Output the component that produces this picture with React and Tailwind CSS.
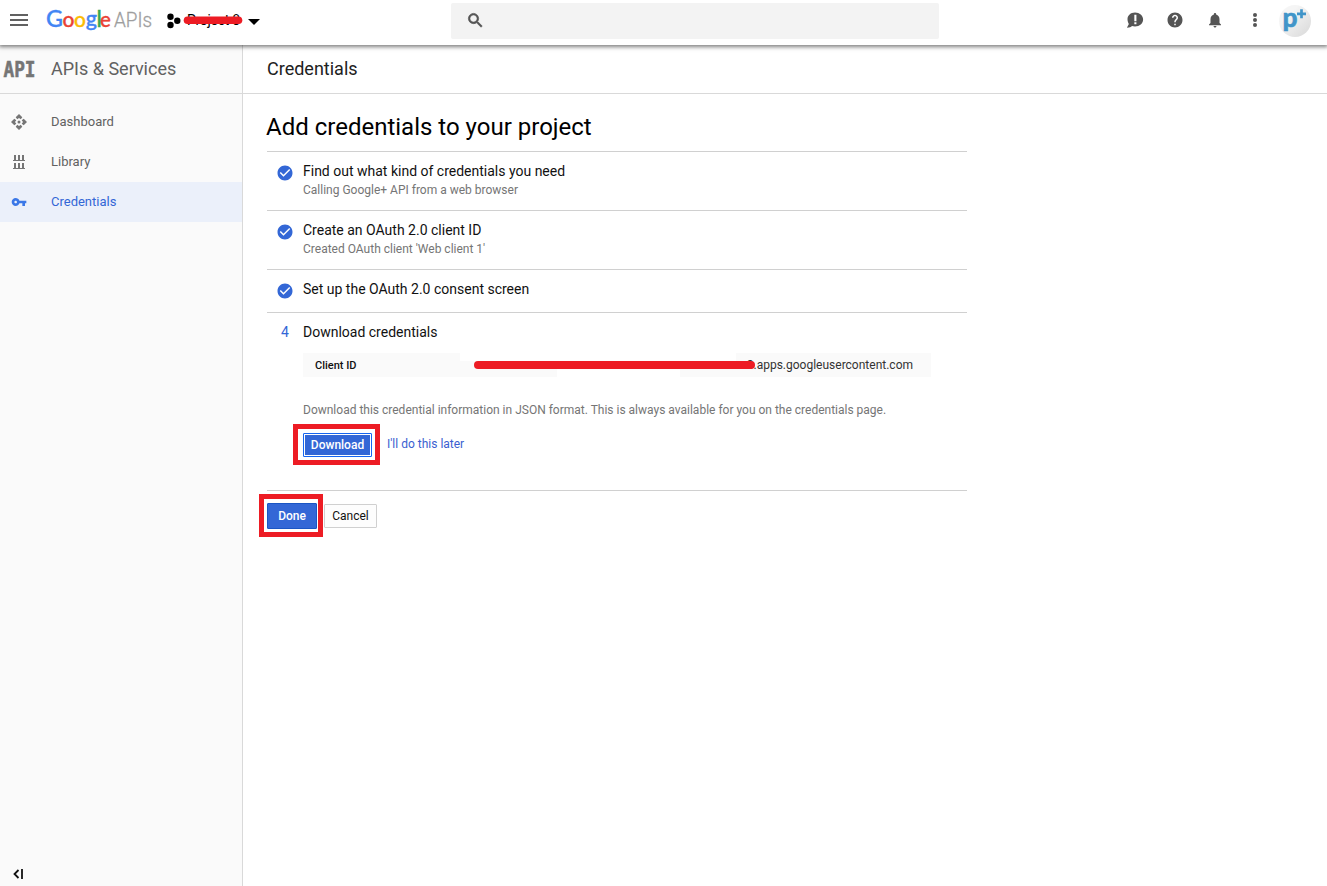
import React from "react";

const P = {
  help: "M12 2C6.48 2 2 6.48 2 12s4.48 10 10 10 10-4.48 10-10S17.52 2 12 2zm1 17h-2v-2h2v2zm2.07-7.75l-.9.92C13.45 12.9 13 13.5 13 15h-2v-.5c0-1.1.45-2.1 1.17-2.83l1.24-1.26c.37-.36.59-.86.59-1.41 0-1.1-.9-2-2-2s-2 .9-2 2H8c0-2.21 1.79-4 4-4s4 1.79 4 4c0 .88-.36 1.68-.93 2.25z",
  bell: "M12 22c1.1 0 2-.9 2-2h-4c0 1.1.89 2 2 2zm6-6v-5c0-3.07-1.64-5.64-4.5-6.32V4c0-.83-.67-1.5-1.5-1.5s-1.5.67-1.5 1.5v.68C7.63 5.36 6 7.92 6 11v5l-2 2v1h16v-1l-2-2z",
  search: "M15.5 14h-.79l-.28-.27C15.41 12.59 16 11.11 16 9.5 16 5.91 13.09 3 9.5 3S3 5.91 3 9.5 5.91 16 9.5 16c1.61 0 3.09-.59 4.23-1.57l.27.28v.79l5 4.99L20.49 19l-4.99-5zm-6 0C7.01 14 5 11.99 5 9.5S7.01 5 9.5 5 14 7.01 14 9.5 11.99 14 9.5 14z",
  key: "M12.65 10C11.83 7.67 9.61 6 7 6c-3.31 0-6 2.69-6 6s2.69 6 6 6c2.61 0 4.83-1.67 5.65-4H17v4h4v-4h2v-4H12.65zM7 14c-1.1 0-2-.9-2-2s.9-2 2-2 2 .9 2 2-.9 2-2 2z",
  check: "M12 2C6.48 2 2 6.48 2 12s4.48 10 10 10 10-4.48 10-10S17.52 2 12 2zm-2 15l-5-5 1.41-1.41L10 14.17l7.59-7.59L19 8l-9 9z",
};

function Icon({ d, className, viewBox = "0 0 24 24", children }) {
  return (
    <svg viewBox={viewBox} className={className} fill="currentColor" aria-hidden="true">
      {d ? <path d={d} /> : children}
    </svg>
  );
}

function Logo() {
  return (
    <svg className="ml-[17px] h-[45px] w-[110px] shrink-0" viewBox="45 0 110 45" fontFamily="Lato, sans-serif" fontSize="22.5">
      <g fontWeight="500" strokeWidth="0.35">
        <text x="46" y="27" fill="#4285f4" stroke="#4285f4" textLength="17" lengthAdjust="spacingAndGlyphs">G</text>
        <text x="62.5" y="27" fill="#ea4335" stroke="#ea4335" fontSize="21">o</text>
        <text x="74" y="27" fill="#fbbc05" stroke="#fbbc05" fontSize="21">o</text>
        <text x="85.8" y="26.3" fill="#4285f4" stroke="#4285f4" fontSize="21.5">g</text>
        <text x="96.6" y="27" fill="#34a853" stroke="#34a853">l</text>
        <text x="100" y="27" fill="#ea4335" stroke="#ea4335" fontSize="20.5">e</text>
      </g>
      <text x="114" y="26.7" fill="#9e9e9e" stroke="#9e9e9e" strokeWidth="0.3" fontFamily="Roboto, sans-serif" fontWeight="300" fontSize="19.5" textLength="38" lengthAdjust="spacingAndGlyphs">APIs</text>
    </svg>
  );
}

function Header() {
  return (
    <header className="relative z-10 flex h-[45px] shrink-0 items-start bg-white shadow-[0_1px_4px_1px_rgba(0,0,0,0.5)]">
      <div className="ml-[10px] mt-[14px] flex h-3 w-[18px] flex-col justify-between">
        <span className="h-[2px] bg-[#616161]" />
        <span className="h-[2px] bg-[#616161]" />
        <span className="h-[2px] bg-[#616161]" />
      </div>
      <Logo />
      <svg className="ml-[11px] h-[45px] w-[96px] shrink-0" viewBox="166 0 96 45">
        <circle cx="170.5" cy="16.8" r="3.2" />
        <circle cx="170.5" cy="25" r="3.2" />
        <circle cx="177.3" cy="20.8" r="3.2" />
        <text x="187" y="25" fontFamily="Roboto, sans-serif" fontSize="14" textLength="53">Project 8</text>
        <path d="M187.500 20.300H238.500" stroke="#ed1c24" strokeWidth="7.600" strokeLinecap="round" />
        <path d="M248 19H260L254 25Z" />
      </svg>
      <div className="ml-[189px] mt-[3px] flex h-9 w-[488px] items-center rounded-[2px] bg-[#f3f3f3]">
        <Icon d={P.search} className="mb-px ml-[15px] size-[19px] text-[#555] [stroke:#555] [stroke-width:0.8]" />
      </div>
      <div className="ml-auto mr-4 flex h-[42px] items-center text-[#555]">
        <Icon className="mb-[2px] mr-[22px] size-[18px]">
          <path d="M12 2C6.200 2 2 5.800 2 11c0 2.500.8 4.500 1.800 6.200L1.200 22.200C5 22.200 6.500 21.300 8 20c1.200.4 2.500.6 4 .6 6.200 0 10.800-4 10.800-9.300S18 2 12 2z" />
          <path d="M11.100 5h2.800v8.500h-2.800zM11.100 15h2.800v2.800h-2.800z" fill="white" />
        </Icon>
        <Icon d={P.help} className="mb-[2px] mr-[22px] size-[18px]" />
        <Icon d={P.bell} className="mb-[2px] mr-[29px] size-[18px]" />
        <span className="mb-[2px] mr-[22px] flex flex-col gap-[1px]">
          <i className="size-1 rounded-full bg-[#555]" />
          <i className="size-1 rounded-full bg-[#555]" />
          <i className="size-1 rounded-full bg-[#555]" />
        </span>
        <svg className="size-8 overflow-visible" viewBox="0 0 32 32">
          <defs>
            <linearGradient id="avatar" x1="0" y1="0" x2="1" y2="1">
              <stop offset="0.3" stopColor="#f5f5f5" />
              <stop offset="1" stopColor="#d8d8d8" />
            </linearGradient>
          </defs>
          <circle cx="16" cy="16" r="16" fill="url(#avatar)" />
          <text x="3.500" y="22.300" fontFamily="Lato, sans-serif" fontWeight="900" fontSize="26" textLength="15" lengthAdjust="spacingAndGlyphs" fill="#4195c9" stroke="#4195c9" strokeWidth="0.500">p</text>
          <path d="M22.500 4.300V13.300M18 8.800H27" stroke="#4195c9" strokeWidth="2.700" />
        </svg>
      </div>
    </header>
  );
}

function NavItem({ icon, label, active }) {
  return (
    <a className={active ? "flex h-10 items-center bg-[#ebf0fa] text-[#3367d6]" : "flex h-10 items-center text-[#616161]"}>
      <span className="ml-[11px] flex w-4 shrink-0 justify-center">{icon}</span>
      <span className="ml-6 text-[13px] leading-10">{label}</span>
    </a>
  );
}

function Sidebar() {
  return (
    <aside className="flex w-[243px] shrink-0 flex-col border-r border-[#d9d9d9] bg-[#fafafa]">
      <div className="flex h-[49px] items-center border-b border-[#d9d9d9]">
        <svg className="ml-[3px] h-9 w-[34px] overflow-visible" viewBox="0 0 34 36">
          <text transform="translate(0.500 26) scale(1 1.220)" fontFamily="'DejaVu Sans Mono', monospace" fontWeight="700" fontSize="18" textLength="32" lengthAdjust="spacingAndGlyphs" fill="#757575" stroke="#757575" strokeWidth="0.500">API</text>
        </svg>
        <h1 className="ml-[14px] text-[18px] leading-[48px] text-[#616161]">APIs &amp; Services</h1>
      </div>
      <nav className="mt-2 flex flex-col">
        <NavItem
          label="Dashboard"
          icon={
            <Icon className="size-4 shrink-0 text-[#757575]" viewBox="0 0 16 16">
              <path d="M8 0L11.300 3.300L9.800 5.300L8 4L6.200 5.300L4.700 3.300ZM8 16L11.300 12.700L9.800 10.700L8 12L6.200 10.700L4.700 12.700ZM0 8L3.300 4.700L5.300 6.200L4 8L5.300 9.800L3.300 11.300ZM16 8L12.700 4.700L10.700 6.200L12 8L10.700 9.800L12.700 11.300Z" />
              <circle cx="8" cy="8" r="1.500" />
            </Icon>
          }
        />
        <NavItem
          label="Library"
          icon={
            <Icon className="h-[14px] w-3 shrink-0 text-[#757575]" viewBox="0 0 12 14">
              <path d="M1 0H3V5H5V0H7V5H9V0H11V5H12V6H0V5H1ZM1 8H3V13H5V8H7V13H9V8H11V13H12V14H0V13H1Z" />
            </Icon>
          }
        />
        <NavItem label="Credentials" active icon={<Icon d={P.key} className="size-4 shrink-0 text-[#3b78e7]" />} />
      </nav>
      <svg className="mb-[7px] ml-[13px] mt-auto h-[10px] w-[11px]" viewBox="0 0 11 10" fill="none" stroke="#111" strokeWidth="1.800">
        <path d="M5.500 1L1.500 5L5.500 9M9 0V10" />
      </svg>
    </aside>
  );
}

function Step({ title, sub, className }) {
  return (
    <section className={className}>
      <Icon d={P.check} className="ml-[9px] mt-[12px] size-[18px] shrink-0 text-[#3367d6]" />
      <div className="ml-[9px] mt-[9px]">
        <h3 className="text-[14px] leading-5 text-[#111]">{title}</h3>
        {sub && <p className="pt-px text-[12px] leading-[17px] text-[#757575]">{sub}</p>}
      </div>
    </section>
  );
}

function DownloadStep() {
  return (
    <section className="h-[178px] border-t border-[#d0d0d0] pt-[9px]">
      <div className="flex h-5 text-[14px] leading-5">
        <span className="w-9 text-center text-[#3367d6]">4</span>
        <h3 className="text-[#111]">Download credentials</h3>
      </div>
      <div className="relative ml-9 mt-[11px] flex h-6 w-[628px] items-center bg-[#fafafa] bg-[linear-gradient(#fff,#fff),linear-gradient(#fff,#fff)] bg-no-repeat [background-position:157px_0,254px_8px] [background-size:276px_8px,123px_16px]">
        <span className="ml-3 pt-[2px] text-[11px] font-medium text-[#111]">Client ID</span>
        <span className="ml-auto mr-[18px] text-[12px] text-[#333]">8.apps.googleusercontent.com</span>
        <svg className="absolute left-[170px] top-[7px] h-[10px] w-[284px]" viewBox="0 0 284 10">
          <path d="M5 5H278" stroke="#ed1c24" strokeWidth="8" strokeLinecap="round" />
        </svg>
      </div>
      <p className="ml-9 mt-6 text-[12px] leading-[18px] text-[#757575]">
        Download this credential information in JSON format. This is always available for you on the credentials page.
      </p>
      <div className="ml-9 mt-[14px] flex items-start">
        <div className="relative">
          <button className="flex h-6 w-[69px] items-center justify-center rounded-[1px] border border-[#1565f0] bg-[#3367d6] text-[12px] font-medium text-white shadow-[inset_0_0_0_1px_#fff]">
            Download
          </button>
          <span className="absolute -left-[10px] -top-[9px] h-[41px] w-[87px] border-[5px] border-[#ed1c24]" />
        </div>
        <a className="ml-[15px] mt-[1px] text-[12px] leading-5 text-[#3b5fd0]">I'll do this later</a>
      </div>
    </section>
  );
}

function Content() {
  return (
    <main className="flex-1 bg-white">
      <h2 className="h-[49px] border-b border-[#d9d9d9] pl-6 text-[18px] leading-[48px] text-[#212121]">Credentials</h2>
      <div className="ml-6 w-[700px]">
        <h2 className="-ml-px h-[57px] pt-[17px] text-[24px] leading-8 text-black">Add credentials to your project</h2>
        <Step className="flex h-[59px] border-t border-[#d0d0d0]" title="Find out what kind of credentials you need" sub="Calling Google+ API from a web browser" />
        <Step className="flex h-[59px] border-t border-[#d0d0d0]" title="Create an OAuth 2.0 client ID" sub="Created OAuth client 'Web client 1'" />
        <Step className="flex h-[43px] border-t border-[#d0d0d0]" title="Set up the OAuth 2.0 consent screen" />
        <DownloadStep />
        <div className="flex items-start border-t border-[#d0d0d0] pt-3">
          <div className="relative">
            <button className="flex h-[26px] w-[50px] items-center justify-center rounded-[1px] border border-[#1a55c4] bg-[#3367d6] text-[12px] font-medium text-white">
              Done
            </button>
            <span className="absolute -left-2 -top-[9px] h-[43px] w-16 border-[5px] border-[#ed1c24]" />
          </div>
          <button className="ml-[7px] mt-[1px] flex h-6 w-[53px] items-center justify-center rounded-[1px] border border-[#d0d0d0] bg-[#fdfdfd] text-[12px] text-[#111]">
            Cancel
          </button>
        </div>
      </div>
    </main>
  );
}

export default function App() {
  return (
    <div className="flex h-[886px] w-[1327px] flex-col overflow-hidden bg-white font-['Roboto',sans-serif]">
      <Header />
      <div className="flex flex-1">
        <Sidebar />
        <Content />
      </div>
    </div>
  );
}
